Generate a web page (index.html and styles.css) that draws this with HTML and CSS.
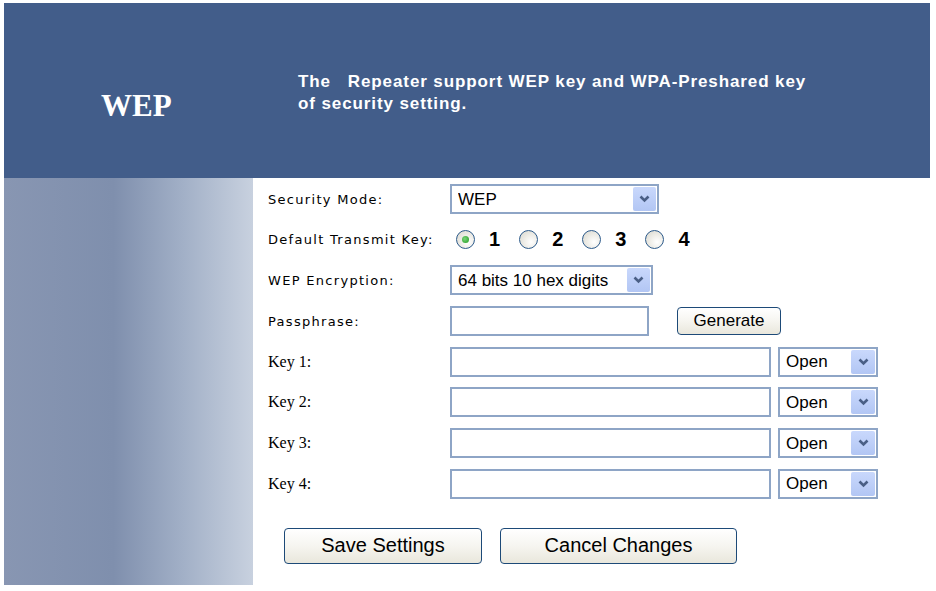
FILE: index.html
```html
<!DOCTYPE html>
<html>
<head>
<meta charset="utf-8">
<title>WEP</title>
<link rel="stylesheet" href="styles.css">
</head>
<body>
<div class="page">
  <header class="header">
    <div class="title">WEP</div>
    <div class="desc">The &nbsp; Repeater support WEP key and WPA-Preshared key<br>of security setting.</div>
  </header>
  <div class="main">
    <aside class="side"></aside>
    <section class="content">
      <div class="form">
        <div class="row">
          <label class="lbl">Security Mode:</label>
          <div class="sel sel-mode"><select><option>WEP</option></select><span class="arrow"><svg width="11" height="8" viewBox="0 0 11 8"><path d="M1.5 1.5 L5.5 5.5 L9.5 1.5" fill="none" stroke="#4a5f86" stroke-width="2.6"/></svg></span></div>
        </div>
        <div class="row">
          <label class="lbl">Default Transmit Key:</label>
          <div class="radios">
            <span class="radio checked"></span><span class="num">1</span>
            <span class="radio"></span><span class="num">2</span>
            <span class="radio"></span><span class="num">3</span>
            <span class="radio"></span><span class="num">4</span>
          </div>
        </div>
        <div class="row">
          <label class="lbl">WEP Encryption:</label>
          <div class="sel sel-enc"><select><option>64 bits 10 hex digits</option></select><span class="arrow"><svg width="11" height="8" viewBox="0 0 11 8"><path d="M1.5 1.5 L5.5 5.5 L9.5 1.5" fill="none" stroke="#4a5f86" stroke-width="2.6"/></svg></span></div>
        </div>
        <div class="row">
          <label class="lbl">Passphrase:</label>
          <input class="txt txt-pass" type="text">
          <button class="btn btn-gen">Generate</button>
        </div>
        <div class="row">
          <label class="lbl key">Key 1:</label>
          <input class="txt txt-key" type="text">
          <div class="sel sel-auth"><select><option>Open</option></select><span class="arrow"><svg width="11" height="8" viewBox="0 0 11 8"><path d="M1.5 1.5 L5.5 5.5 L9.5 1.5" fill="none" stroke="#4a5f86" stroke-width="2.6"/></svg></span></div>
        </div>
        <div class="row">
          <label class="lbl key">Key 2:</label>
          <input class="txt txt-key" type="text">
          <div class="sel sel-auth"><select><option>Open</option></select><span class="arrow"><svg width="11" height="8" viewBox="0 0 11 8"><path d="M1.5 1.5 L5.5 5.5 L9.5 1.5" fill="none" stroke="#4a5f86" stroke-width="2.6"/></svg></span></div>
        </div>
        <div class="row">
          <label class="lbl key">Key 3:</label>
          <input class="txt txt-key" type="text">
          <div class="sel sel-auth"><select><option>Open</option></select><span class="arrow"><svg width="11" height="8" viewBox="0 0 11 8"><path d="M1.5 1.5 L5.5 5.5 L9.5 1.5" fill="none" stroke="#4a5f86" stroke-width="2.6"/></svg></span></div>
        </div>
        <div class="row">
          <label class="lbl key">Key 4:</label>
          <input class="txt txt-key" type="text">
          <div class="sel sel-auth"><select><option>Open</option></select><span class="arrow"><svg width="11" height="8" viewBox="0 0 11 8"><path d="M1.5 1.5 L5.5 5.5 L9.5 1.5" fill="none" stroke="#4a5f86" stroke-width="2.6"/></svg></span></div>
        </div>
      </div>
      <div class="actions">
        <button class="btn btn-save">Save Settings</button>
        <button class="btn btn-cancel">Cancel Changes</button>
      </div>
    </section>
  </div>
</div>
</body>
</html>
```
FILE: styles.css
```css
html, body {
  margin: 0;
  padding: 0;
  background: #ffffff;
}
.page {
  padding: 3px 6px 0 4px;
  width: 926px;
}
.header {
  height: 175px;
  background: #425d8a;
  display: flex;
  align-items: flex-start;
  padding-top: 68px;
  box-sizing: border-box;
  color: #ffffff;
}
.title {
  width: 197px;
  padding-left: 97px;
  margin-top: 18px;
  font-family: "Liberation Serif", serif;
  font-weight: bold;
  font-size: 31px;
  line-height: 34px;
  flex-shrink: 0;
}
.desc {
  font-family: "Liberation Sans", Arial, sans-serif;
  font-weight: bold;
  font-size: 17px;
  letter-spacing: 0.9px;
  line-height: 22px;
  white-space: nowrap;
}
.main {
  display: flex;
  height: 407px;
}
.side {
  width: 249px;
  flex-shrink: 0;
  background: linear-gradient(to right, #8896b2 0%, #7f8fad 44%, #a2b0c7 72%, #c8d1df 100%);
}
.content {
  flex: 1;
  padding: 6px 0 0 15px;
}
.form {
  display: flex;
  flex-direction: column;
  gap: 10.7px;
}
.row {
  display: flex;
  align-items: center;
  height: 30px;
}
.lbl {
  width: 182px;
  flex-shrink: 0;
  font-family: "DejaVu Sans", Verdana, sans-serif;
  font-size: 13px;
  letter-spacing: 1.3px;
  color: #000;
}
.lbl.key {
  font-family: "Liberation Serif", serif;
  font-size: 16px;
  letter-spacing: 0;
}
.sel {
  height: 30px;
  box-sizing: border-box;
  border: 2px solid #8ea5c6;
  background: #fff;
  display: flex;
  align-items: center;
}
.sel select {
  appearance: none;
  -webkit-appearance: none;
  border: none;
  outline: none;
  background: transparent;
  flex: 1;
  min-width: 0;
  height: 100%;
  padding: 0 0 0 6px;
  margin: 0;
  font-family: "Liberation Sans", Arial, sans-serif;
  font-size: 17px;
  color: #000;
}
.arrow {
  width: 23px;
  height: 24px;
  margin-right: 1px;
  border-radius: 2px;
  background: linear-gradient(#c9d8fc, #b2c6f4);
  display: flex;
  align-items: center;
  justify-content: center;
  flex-shrink: 0;
}
.sel-mode { width: 209px; }
.sel-enc { width: 203px; }
.sel-auth { width: 100px; margin-left: 7px; }
.sel-auth .arrow { width: 24px; }
.txt {
  height: 30px;
  box-sizing: border-box;
  border: 2px solid #8ea5c6;
  background: #fff;
  margin: 0;
  padding: 0 4px;
  outline: none;
}
.txt-pass { width: 199px; }
.txt-key { width: 321px; }
.radios {
  display: flex;
  align-items: center;
  padding-left: 6px;
}
.radio {
  width: 19px;
  height: 19px;
  box-sizing: border-box;
  border-radius: 50%;
  border: 1px solid #2c5a8a;
  background: radial-gradient(circle at 65% 65%, #ffffff 0%, #f0efea 40%, #d8d6cc 100%);
  display: flex;
  align-items: center;
  justify-content: center;
}
.radio.checked::after {
  content: "";
  width: 7px;
  height: 7px;
  border-radius: 50%;
  background: radial-gradient(circle at 40% 40%, #7bd57b, #1f9a1f);
}
.num {
  font-family: "Liberation Sans", Arial, sans-serif;
  font-weight: bold;
  font-size: 20px;
  margin-left: 14px;
  margin-right: 19px;
  color: #000;
}
.btn {
  font-family: "Liberation Sans", Arial, sans-serif;
  color: #000;
  border: 1px solid #1d4a78;
  border-radius: 4px;
  background: linear-gradient(#ffffff 0%, #f6f5f0 50%, #e9e7dc 100%);
  padding: 0;
  margin: 0;
}
.btn-gen {
  width: 104px;
  height: 28px;
  margin-left: 28px;
  font-size: 17px;
}
.actions {
  display: flex;
  gap: 18px;
  margin-top: 29px;
  padding-left: 16px;
}
.btn-save {
  width: 198px;
  height: 36px;
  font-size: 20px;
}
.btn-cancel {
  width: 237px;
  height: 36px;
  font-size: 20px;
}
```
